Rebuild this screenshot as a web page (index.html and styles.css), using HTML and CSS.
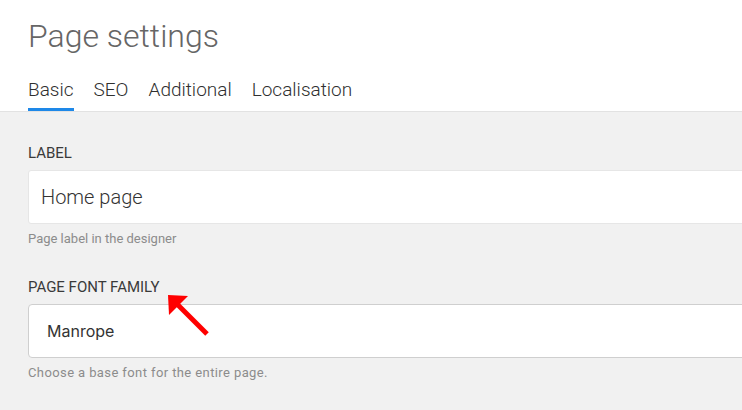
FILE: index.html
```html
<!DOCTYPE html>
<html lang="en">
<head>
<meta charset="utf-8">
<title>Page settings</title>
<link rel="stylesheet" href="styles.css">
</head>
<body>
<header class="header">
  <h1 class="title">Page settings</h1>
  <nav class="tabs">
    <span class="tab active">Basic</span>
    <span class="tab">SEO</span>
    <span class="tab">Additional</span>
    <span class="tab">Localisation</span>
  </nav>
</header>
<main class="panel">
  <div class="field">
    <div class="label">LABEL</div>
    <div class="input input-light">Home page</div>
    <div class="help">Page label in the designer</div>
  </div>
  <div class="field">
    <div class="label">PAGE FONT FAMILY</div>
    <div class="input input-select">Manrope</div>
    <div class="help help-wide">Choose a base font for the entire page.</div>
  </div>
  <svg class="arrow" width="60" height="60" viewBox="0 0 60 60" aria-hidden="true">
    <line x1="47" y1="49" x2="15" y2="17" stroke="#ff0000" stroke-width="5"/>
    <polygon points="8,10 28,11 9,30" fill="#ff0000"/>
  </svg>
</main>
</body>
</html>
```
FILE: styles.css
```css
html, body {
  margin: 0;
  padding: 0;
}
body {
  font-family: Roboto, "Liberation Sans", sans-serif;
  background: #f1f1f1;
  overflow: hidden;
  height: 410px;
  color: #333;
}
.header {
  background: #fff;
  padding: 17px 28px 0;
}
.title {
  margin: 0;
  font-size: 32px;
  font-weight: 300;
  line-height: 38px;
  color: #666;
}
.tabs {
  display: flex;
  gap: 20px;
  margin-top: 24px;
}
.tab {
  font-size: 19px;
  font-weight: 300;
  line-height: 21px;
  color: #2f2f2f;
  padding-bottom: 8px;
  border-bottom: 3px solid transparent;
}
.tab.active {
  border-bottom-color: #1e88e8;
}
.panel {
  position: relative;
  border-top: 1px solid #e2e2e2;
  padding: 32px 0 0 28px;
}
.field {
  margin-bottom: 32px;
}
.label {
  font-size: 15px;
  line-height: 18px;
  color: #3a3a3a;
  margin-bottom: 8px;
}
.input {
  box-sizing: border-box;
  height: 54px;
  width: 740px;
  background: #fff;
  border: 1px solid #e6e6e6;
  border-radius: 3px;
  display: flex;
  align-items: center;
}
.input-light {
  font-size: 20px;
  font-weight: 300;
  color: #333;
  padding-left: 12px;
}
.input-select {
  border-color: #cfcfcf;
  border-radius: 4px;
  font-family: Inter, "Noto Sans", sans-serif;
  font-size: 16px;
  color: #333;
  padding-left: 18px;
}
.help {
  margin-top: 7px;
  font-size: 13px;
  line-height: 15px;
  color: #8c8c8c;
}
.help-wide {
  letter-spacing: 0.4px;
}
.arrow {
  position: absolute;
  left: 160px;
  top: 173px;
}
```
